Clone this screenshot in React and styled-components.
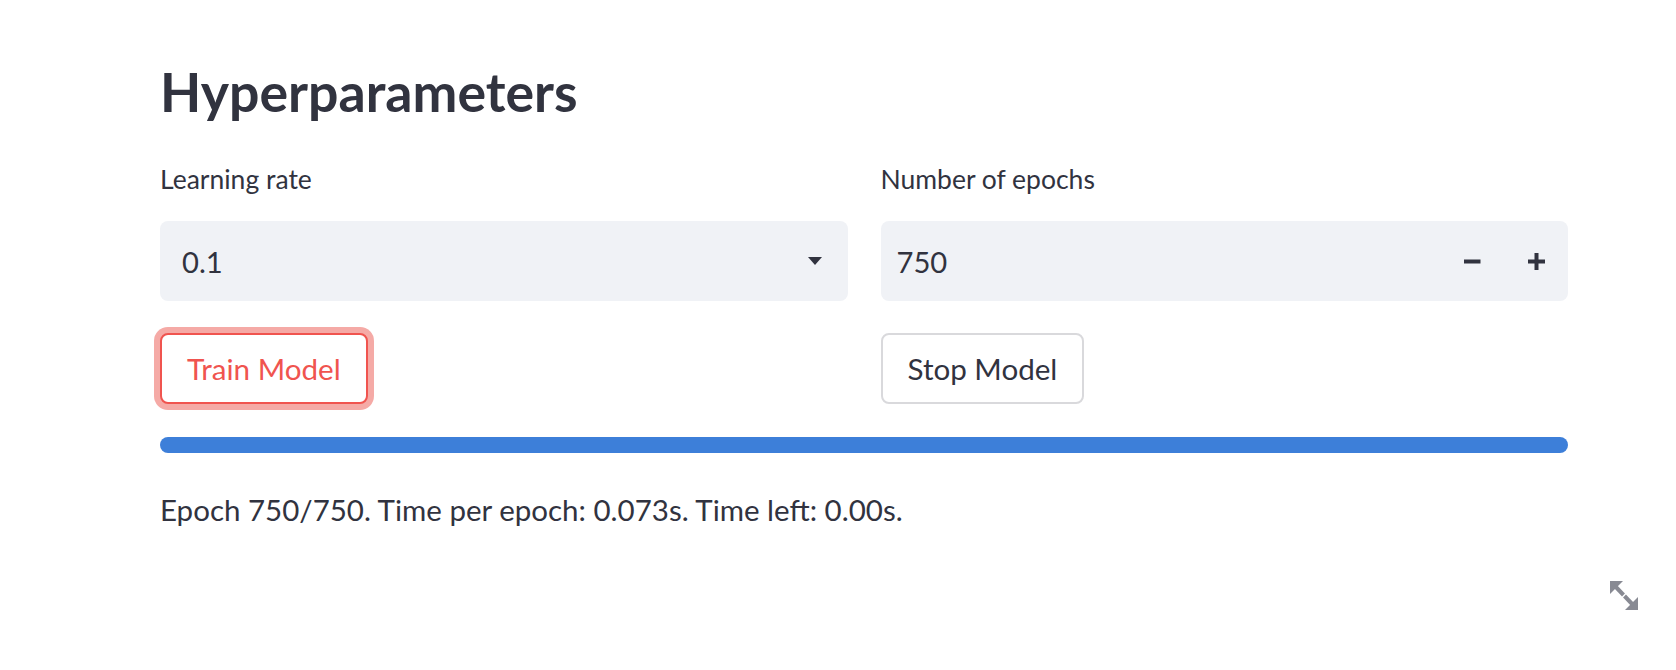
import React from "react";
import styled, { createGlobalStyle } from "styled-components";

const Global = createGlobalStyle`
  body {
    margin: 0;
    background: #ffffff;
    font-family: Lato, "Noto Sans", sans-serif;
    color: #31333f;
  }
`;

const Page = styled.main`
  width: 1408px;
  padding: 59px 0 0 160px;
`;

const Title = styled.h3`
  margin: 0;
  font-size: 53.6px;
  line-height: 64px;
  font-weight: 700;
  color: #31333f;
`;

const Columns = styled.div`
  display: grid;
  grid-template-columns: 1fr 1fr;
  column-gap: 33px;
  margin-top: 40px;
`;

const Column = styled.div`
  display: flex;
  flex-direction: column;
  align-items: flex-start;
`;

const Label = styled.label`
  font-size: 26.5px;
  line-height: 32px;
  margin-bottom: 26px;
`;

const Field = styled.div`
  align-self: stretch;
  display: flex;
  align-items: center;
  height: 80px;
  background: #f0f2f6;
  border-radius: 8px;
  font-size: 29.2px;
  padding-left: ${(p) => p.$pad}px;
`;

const Value = styled.span`
  flex: 1;
`;

const Caret = styled.span`
  width: 0;
  height: 0;
  border-left: 7px solid transparent;
  border-right: 7px solid transparent;
  border-top: 8px solid #31333f;
  margin-right: 26px;
`;

const Step = styled.button`
  width: 64px;
  height: 80px;
  border: 0;
  background: transparent;
  display: flex;
  align-items: center;
  justify-content: center;
  padding: 0;
  color: #31333f;
`;

const Button = styled.button`
  margin-top: 32px;
  height: 71px;
  padding: 0 25px;
  border-radius: 8px;
  background: #ffffff;
  font-family: inherit;
  font-size: 29.6px;
  border: 2px solid ${(p) => (p.$focused ? "#f0544f" : "#d9d9dc")};
  color: ${(p) => (p.$focused ? "#f0544f" : "#31333f")};
  box-shadow: ${(p) => (p.$focused ? "0 0 0 6px #f5aaa6" : "none")};
`;

const Track = styled.div`
  margin-top: 33px;
  height: 16px;
  border-radius: 8px;
  background: #3d7fd9;
`;

const Status = styled.p`
  margin: 37px 0 0;
  font-size: 29.5px;
  line-height: 40px;
`;

const Footer = styled.div`
  display: flex;
  justify-content: flex-end;
  padding: 51px 38px 0 0;
  color: #888a93;
`;

const Minus = () => (
  <svg width="17" height="17" viewBox="0 0 17 17">
    <rect x="0" y="6.5" width="16.5" height="4" fill="currentColor" />
  </svg>
);

const Plus = () => (
  <svg width="17" height="17" viewBox="0 0 17 17">
    <rect x="0" y="6.5" width="17" height="4" fill="currentColor" />
    <rect x="6.5" y="0" width="4" height="17" fill="currentColor" />
  </svg>
);

const Expand = () => (
  <svg width="28" height="29" viewBox="0 0 28 29" fill="currentColor">
    <polygon points="0,0 13,0 0,13" />
    <line x1="4" y1="4" x2="13.5" y2="14" stroke="currentColor" strokeWidth="4" />
    <polygon points="28,29 15,29 28,16" />
    <line x1="24" y1="25" x2="14.5" y2="15" stroke="currentColor" strokeWidth="4" />
  </svg>
);

const App = () => {
  return (
    <>
      <Global />
      <Page>
        <Title>Hyperparameters</Title>
        <Columns>
          <Column>
            <Label>Learning rate</Label>
            <Field $pad={22}>
              <Value>0.1</Value>
              <Caret />
            </Field>
            <Button $focused>Train Model</Button>
          </Column>
          <Column>
            <Label>Number of epochs</Label>
            <Field $pad={16}>
              <Value>750</Value>
              <Step>
                <Minus />
              </Step>
              <Step>
                <Plus />
              </Step>
            </Field>
            <Button>Stop Model</Button>
          </Column>
        </Columns>
        <Track />
        <Status>Epoch 750/750. Time per epoch: 0.073s. Time left: 0.00s.</Status>
      </Page>
      <Footer>
        <Expand />
      </Footer>
    </>
  );
};

export default App;
